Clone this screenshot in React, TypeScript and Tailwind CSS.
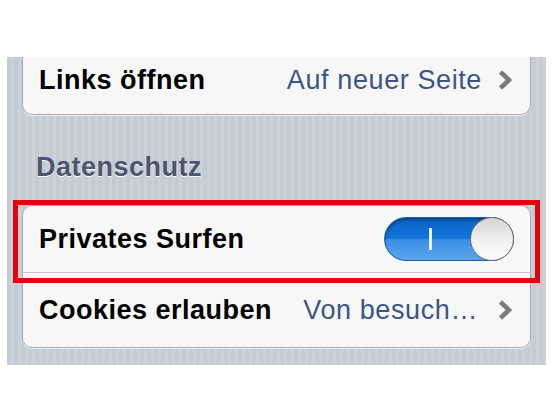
import React from "react"

// iOS-style Safari settings: "Links öffnen", section "Datenschutz" with privacy toggle
function Chevron() {
  return (
    <svg width="14" height="20" viewBox="0 0 14 20" className="block h-[20px] w-[14px] shrink-0">
      <path d="M2.5 2 L11 10 L2.5 18" fill="none" stroke="#7a7a7a" strokeWidth="4.5" strokeLinejoin="miter" />
    </svg>
  )
}

function Toggle() {
  return (
    <div className="relative h-[44px] w-[130px] shrink-0 rounded-full border border-[#1b5ea6] bg-[linear-gradient(to_bottom,#0a62c6_0%,#1274da_48%,#3a8fe6_52%,#5ca6ee_100%)] shadow-[inset_0_2px_3px_rgba(0,0,0,0.35)]">
      <div className="absolute left-[44px] top-[10px] h-[22px] w-[3px] bg-[#e6f6ff]" />
      <div className="absolute right-[-1px] top-[-1px] h-[44px] w-[44px] rounded-full border border-[#6f6f6f] bg-[linear-gradient(to_bottom,#d4d4d4,#f3f3f3_60%,#fbfbfb)]" />
    </div>
  )
}

export default function App() {
  const label = "text-[27px] font-bold tracking-[0.5px] text-black leading-[28px]"
  const value = "text-[27px] tracking-[0.6px] text-[#3a5685] leading-[28px]"

  return (
    <div className="h-[418px] w-[557px] bg-white pt-[57px] font-['Liberation_Sans',Arial,sans-serif]">
      <div className="ml-[7px] w-[539px] bg-[repeating-linear-gradient(90deg,#c4cbd3_0px,#c4cbd3_4px,#cbd1d9_4px,#cbd1d9_7px)] px-[15px] pb-[17px]">
        {/* card 1, top cut off */}
        <div className="flex h-[58px] items-center justify-between rounded-b-[10px] border-x border-b border-[#a7abb1] bg-[#f7f7f7] pb-[12px] pl-[16px] pr-[18px] shadow-[0_1px_0_rgba(255,255,255,0.7)]">
          <span className={label}>Links öffnen</span>
          <div className="flex items-center gap-[16px]">
            <span className={value}>Auf neuer Seite</span>
            <Chevron />
          </div>
        </div>

        {/* section header */}
        <div className="pb-[22px] pl-[14px] pt-[38px]">
          <span className="text-[27px] font-bold leading-[28px] tracking-[0.5px] text-[#4b556b] [text-shadow:0_1px_0_#ffffff]">
            Datenschutz
          </span>
        </div>

        {/* card 2 */}
        <div className="relative rounded-[10px] border border-[#a7abb1] bg-[#f7f7f7] shadow-[0_1px_0_rgba(255,255,255,0.7)]">
          <div className="flex h-[67px] items-center justify-between border-b border-[#c3c6cb] pl-[16px] pr-[16px]">
            <span className={label}>Privates Surfen</span>
            <Toggle />
          </div>
          <div className="flex h-[74px] items-center justify-between pl-[16px] pr-[18px]">
            <span className={label}>Cookies erlauben</span>
            <div className="flex items-center gap-[20px]">
              <span className={value}>Von besuch…</span>
              <Chevron />
            </div>
          </div>

          {/* red highlight annotation */}
          <div className="pointer-events-none absolute left-[-10px] top-[-6px] h-[83px] w-[527px] border-[5px] border-[#e4000c]" />
        </div>
      </div>
    </div>
  )
}
